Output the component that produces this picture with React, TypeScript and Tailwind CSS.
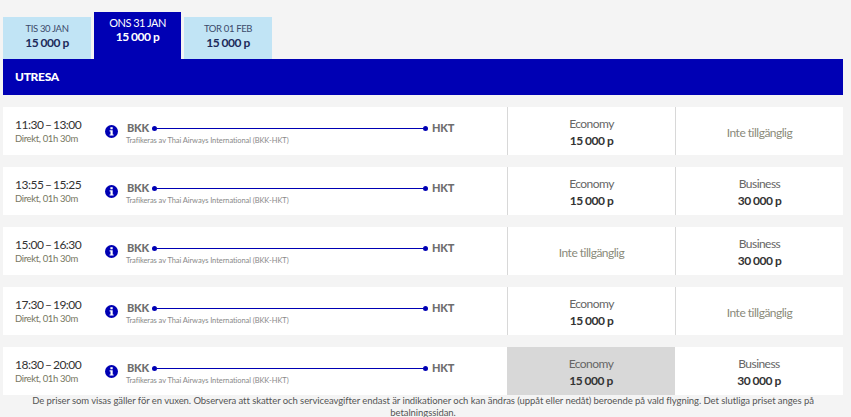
const rows = [
  { time: '11:30 – 13:00', eco: '15 000 p', bus: null, ecoSelected: false },
  { time: '13:55 – 15:25', eco: '15 000 p', bus: '30 000 p', ecoSelected: false },
  { time: '15:00 – 16:30', eco: null, bus: '30 000 p', ecoSelected: false },
  { time: '17:30 – 19:00', eco: '15 000 p', bus: null, ecoSelected: false },
  { time: '18:30 – 20:00', eco: '15 000 p', bus: '30 000 p', ecoSelected: true },
];

const InfoIcon = () => (
  <svg width="13" height="13" viewBox="0 0 13 13" className="shrink-0 mt-[1px]">
    <circle cx="6.5" cy="6.5" r="6.5" fill="#0000b4" />
    <rect x="5.4" y="2.2" width="2.3" height="2.1" fill="#fff" />
    <path d="M4.6 5.3h3.1v4.2h.9v1.1H4.6V9.5h.9V6.4h-.9z" fill="#fff" />
  </svg>
);

const Fare = ({ label, price, selected, border }: { label: string; price: string | null; selected?: boolean; border?: boolean }) => (
  <div
    className={`flex flex-col items-center justify-center h-full ${border ? 'border-l border-[#d8d8d8]' : ''} ${selected ? 'bg-[#d8d8d8]' : ''} w-[168px]`}
  >
    {price ? (
      <div className="flex flex-col items-center pt-[1px]">
        <span className="text-[12px] leading-[18px] tracking-[-0.55px] text-[#666]">{label}</span>
        <span className="text-[12px] leading-[16px] tracking-[-0.5px] font-bold text-[#333]">{price}</span>
      </div>
    ) : (
      <span className="text-[12px] leading-[16px] tracking-[-0.5px] text-[#8a8a7a] pt-[3px]">Inte tillgänglig</span>
    )}
  </div>
);

const Tab = ({ day, price, active }: { day: string; price: string; active?: boolean }) => (
  <div
    className={`flex flex-col items-center ${active ? 'h-[47px] bg-[#0000b4] text-white w-[87px] pt-[4px]' : 'h-[42px] bg-[#c1e4f5] text-[#1c2a5a] w-[88px] pt-[5px]'}`}
  >
    <span className={`leading-[14px] ${active ? 'text-[11px] tracking-[-0.5px]' : 'text-[9.5px] tracking-[-0.35px] text-[#3c4a6a]'}`}>{day}</span>
    <span className="text-[12px] leading-[14px] tracking-[-0.5px] font-bold">{price}</span>
  </div>
);

export default function App() {
  return (
    <div className="h-[417px] w-[851px] overflow-hidden bg-[#f4f4f4] font-['Lato',sans-serif] pl-[3px] pr-[8px] pt-[12px]">
      <div className="flex items-end gap-[3px]">
        <Tab day="TIS 30 JAN" price="15 000 p" />
        <Tab day="ONS 31 JAN" price="15 000 p" active />
        <Tab day="TOR 01 FEB" price="15 000 p" />
      </div>
      <div className="h-[36px] bg-[#0000b4] flex items-center px-[12px] text-white text-[12px] font-black tracking-[-0.3px]">UTRESA</div>

      <div className="mt-[12px] flex flex-col gap-[12px]">
        {rows.map((r) => (
          <div key={r.time} className="h-[48px] bg-white flex items-center">
            <div className="w-[102px] pl-[12px] flex flex-col pt-[1px]">
              <span className="text-[12px] leading-[15px] tracking-[-0.5px] [word-spacing:-1px] text-[#333]">{r.time}</span>
              <span className="text-[9.5px] leading-[14px] tracking-[-0.35px] text-[#77775f]">Direkt, 01h 30m</span>
            </div>
            <InfoIcon />
            <div className="flex-1 pl-[9px] pt-[4px]">
              <div className="flex items-center mt-[1px]">
                <span className="text-[11px] font-black leading-[13px] pb-[2px] tracking-[-0.2px] text-[#6e6e6e] w-[25px]">BKK</span>
                <span className="w-[5px] h-[5px] rounded-full bg-[#0000b4]" />
                <span className="w-[266px] h-[1px] bg-[#0000b4]" />
                <span className="w-[5px] h-[5px] rounded-full bg-[#0000b4]" />
                <span className="text-[11px] font-black leading-[13px] pb-[2px] tracking-[-0.2px] text-[#6e6e6e] ml-[4px]">HKT</span>
              </div>
              <div className="text-[7.5px] leading-[10px] tracking-[-0.08px] text-[#8a8a8a] ml-[-1px]">
                Trafikeras av Thai Airways International (BKK-HKT)
              </div>
            </div>
            <Fare label="Economy" price={r.eco} selected={r.ecoSelected} border={!r.ecoSelected} />
            <Fare label="Business" price={r.bus} border={!r.ecoSelected} />
          </div>
        ))}
      </div>
      <p className="text-[9.5px] leading-[12px] tracking-[-0.065px] text-[#555] text-center px-[20px]">
        De priser som visas gäller för en vuxen. Observera att skatter och serviceavgifter endast är indikationer och kan ändras (uppåt eller nedåt) beroende på vald flygning. Det slutliga priset anges på betalningssidan.
      </p>
    </div>
  );
}
